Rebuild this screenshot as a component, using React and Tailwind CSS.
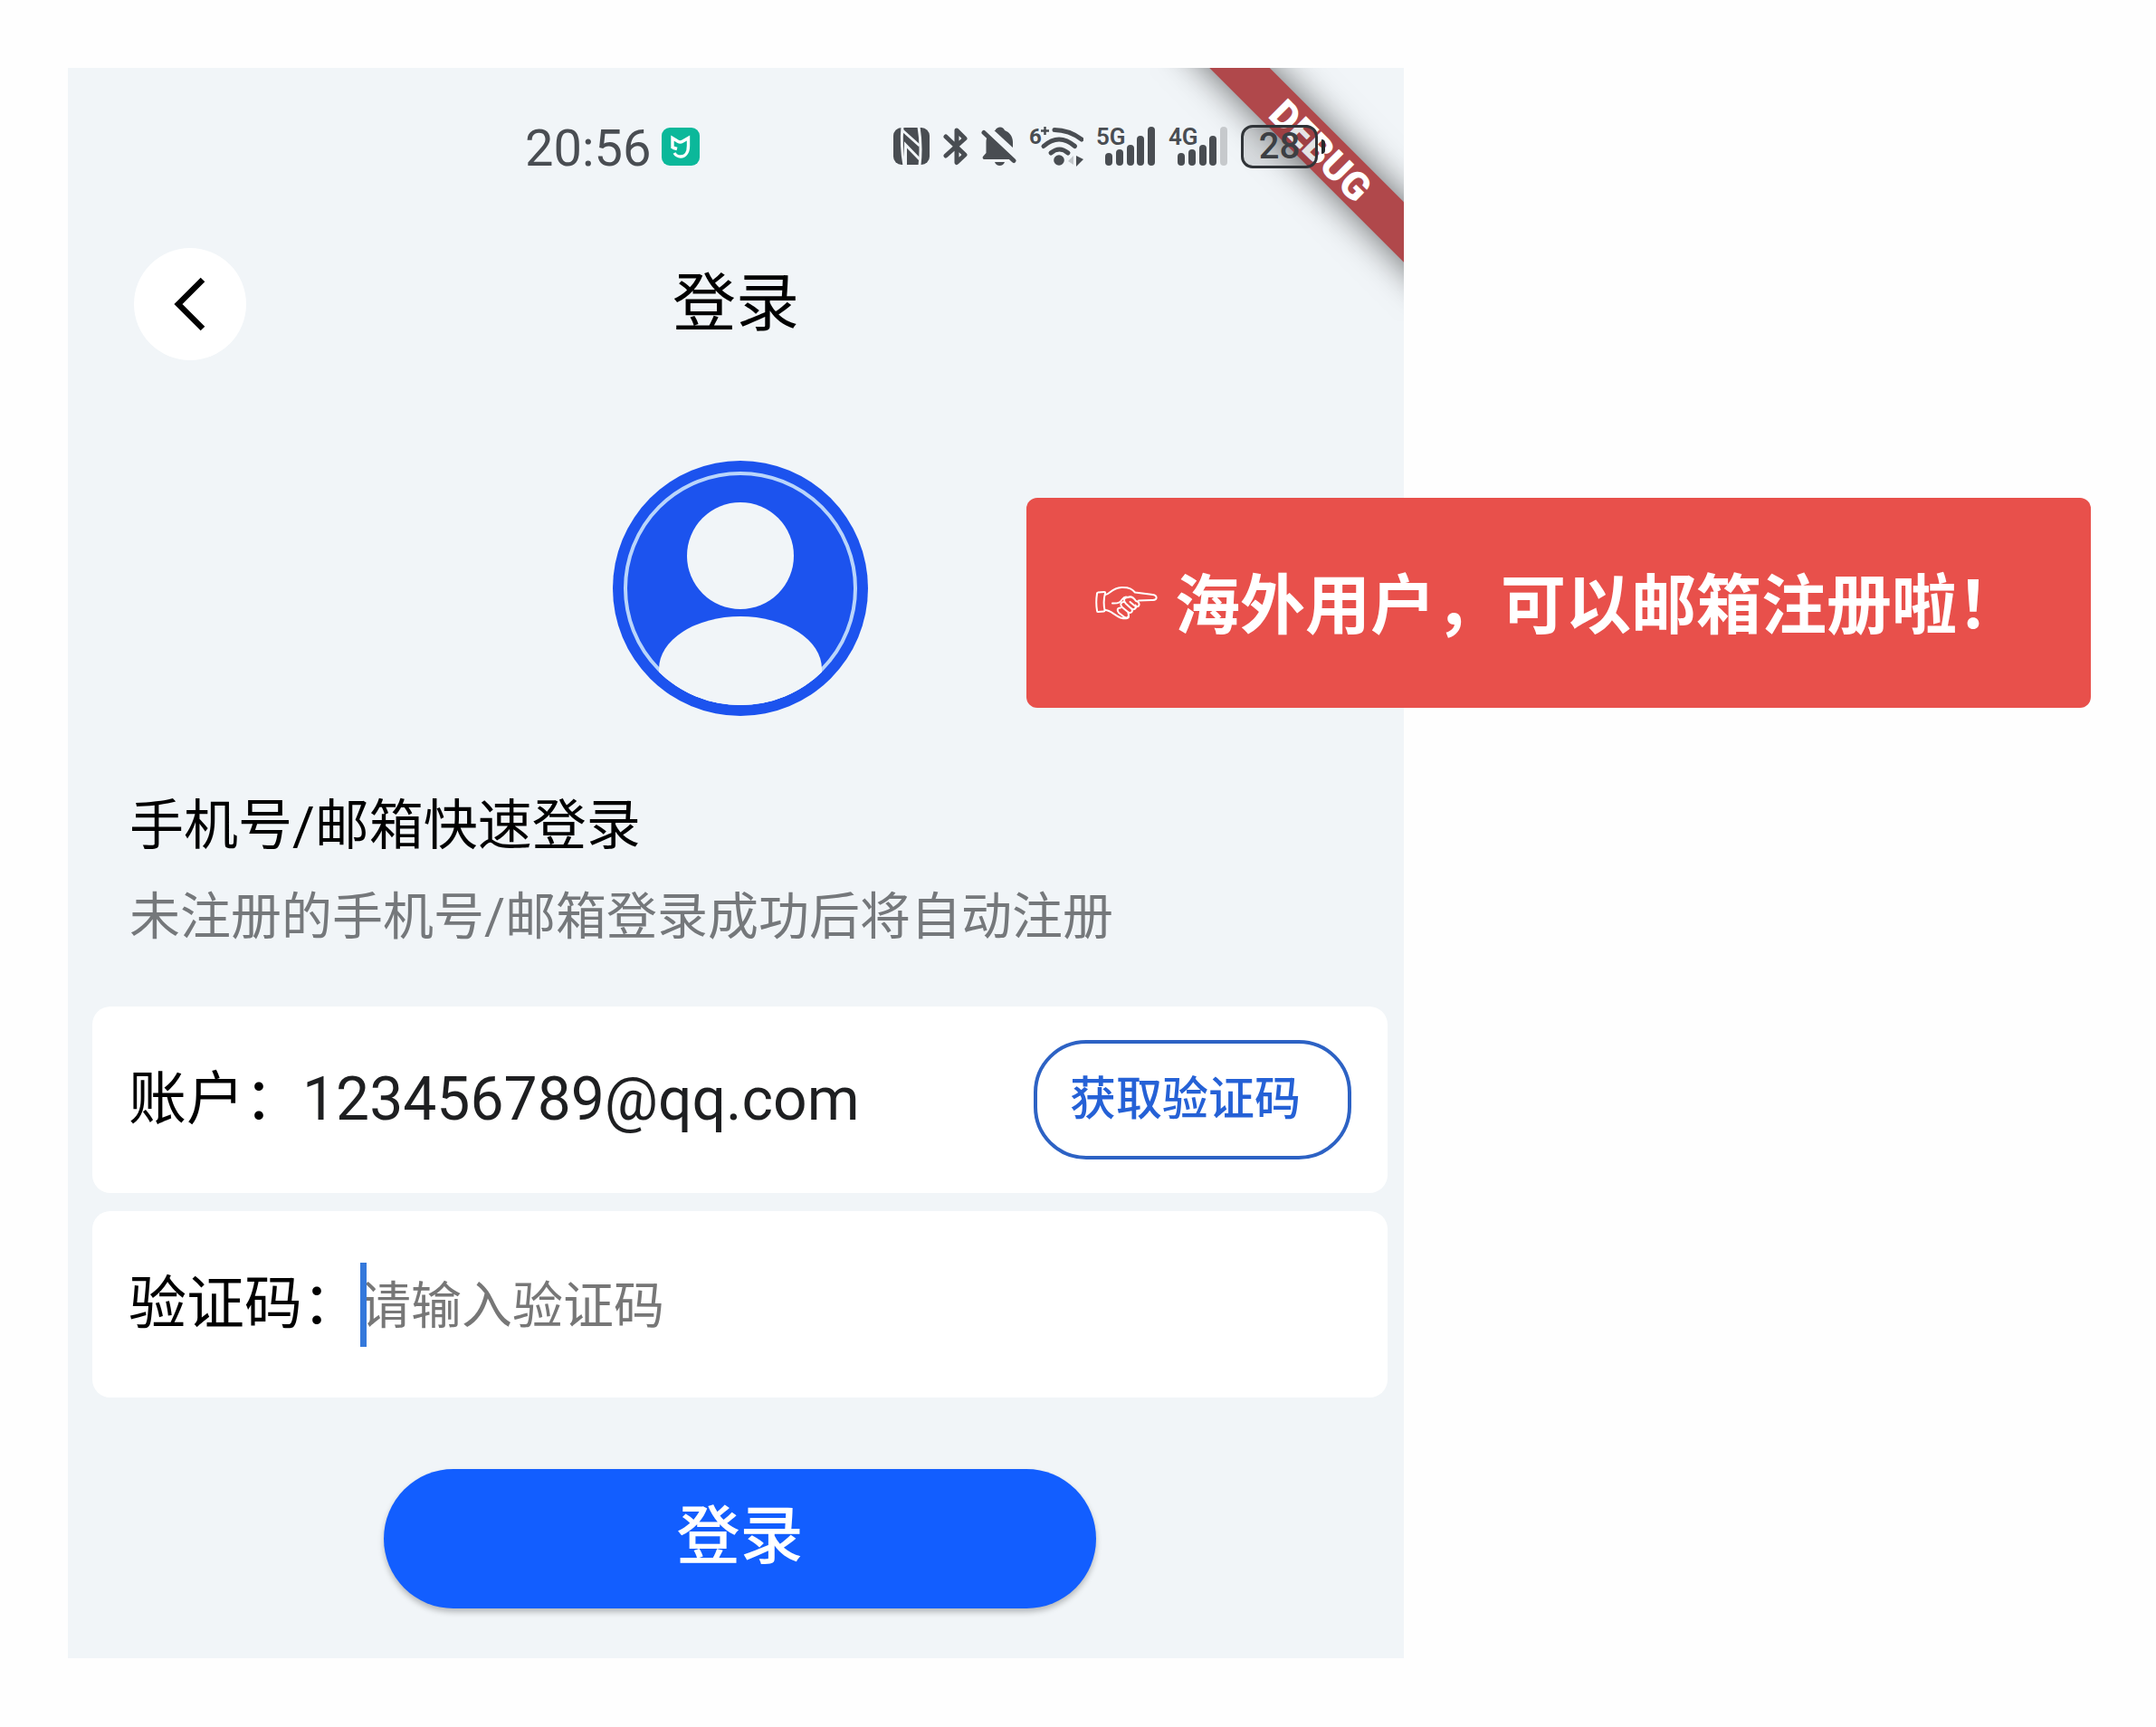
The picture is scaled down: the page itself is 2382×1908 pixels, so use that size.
import React, { useState } from "react";

const BG = "#f1f5f8";
const INK = "#494d52";

function MiHomeIcon() {
  return (
    <svg viewBox="0 0 42 42" className="size-[42px]" aria-hidden="true">
      <rect width="42" height="42" rx="9" fill="#0bb89a" />
      <path
        d="M12 23V11.500l6 3.800a5 5 0 0 0 5 0l6.500-3.800V20c0 7.500-3.500 12-8.500 12-3 0-5.500-1.500-7-4M12 22l5 1.500"
        fill="none"
        stroke="#fff"
        strokeWidth="3.400"
      />
    </svg>
  );
}

function NfcIcon() {
  return (
    <svg viewBox="0 0 40 46" className="h-[46px] w-10" aria-hidden="true">
      <rect x="0" y="2" width="40" height="41" rx="9" fill={INK} />
      <g fill="none" stroke={BG} strokeWidth="3">
        <path d="M10 1Q8 22 12 44" />
        <path d="M28 1Q31.500 22 29 44" />
        <path d="M10 5L29 22" />
        <path d="M13.500 44V21L29 37" />
      </g>
    </svg>
  );
}

function BluetoothIcon() {
  return (
    <svg viewBox="0 0 28 46" className="h-[46px] w-7" aria-hidden="true">
      <path
        d="M4 12L25 32L16 40.500V5L25 14L4 33"
        fill="none"
        stroke={INK}
        strokeWidth="5"
        strokeLinejoin="round"
        strokeLinecap="round"
      />
    </svg>
  );
}

function BellOffIcon() {
  return (
    <svg viewBox="0 0 40 46" className="h-[46px] w-10" aria-hidden="true">
      <path
        d="M22 1.500c2.500 0 4 1.500 5 3.500 5.500 2 9 7 9 13v9l1 6.500c.6 1.800-.2 3.500-2 3.500H5c-2.500 0-3-2-1.600-3.500L6.500 30V18c0-6 4-11 10-13 1-2 3-3.500 5.500-3.500z"
        fill={INK}
      />
      <path d="M16 40h11c-.8 2.800-3 4-5.500 4s-4.700-1.200-5.500-4z" fill={INK} />
      <path d="M5 1L43 36" stroke={BG} strokeWidth="8" />
      <path d="M4 7.500L37 38.500" stroke={INK} strokeWidth="5" strokeLinecap="round" />
    </svg>
  );
}

function WifiIcon() {
  return (
    <div className="relative h-[46px] w-[60px]">
      <svg viewBox="0 0 60 46" className="h-[46px] w-[60px]" aria-hidden="true">
        <path d="M17.500 1v9M13 5.500h9" stroke={INK} strokeWidth="2.500" />
        <g fill="none" stroke={INK} strokeWidth="5" strokeLinecap="round">
          <path d="M28 4.500Q44 4.500 58 15" />
          <path d="M16 22.500Q33 7.500 50.500 22.500" />
          <path d="M24 30Q33.500 22 43 30" />
        </g>
        <circle cx="33" cy="38" r="5.800" fill={INK} />
        <path d="M49 33v10l-6-4z" fill="#c3c7cb" />
        <path d="M52 33l8 4-8 8z" fill={INK} />
      </svg>
      <span className="absolute top-0 left-0 text-[24px] leading-6 font-bold">6</span>
    </div>
  );
}

function SignalIcon({ label, bars }) {
  const tops = [30, 26, 21, 11, 1];
  return (
    <div className="relative h-[46px] w-[66px]">
      <svg viewBox="0 0 66 46" className="h-[46px] w-[66px]" aria-hidden="true">
        {tops.map((top, i) => (
          <rect
            key={top}
            x={10 + i * 12 - (i > 2 ? 1 : 0)}
            y={top}
            width="8"
            height={44 - top}
            rx="4"
            fill={i < bars ? INK : "#c6c9cc"}
          />
        ))}
      </svg>
      <span className="absolute top-0 left-0 text-[26px] leading-6 font-semibold">{label}</span>
    </div>
  );
}

function Battery({ level }) {
  return (
    <div className="flex items-center gap-1">
      <div className="flex h-12 w-[85px] items-center justify-center rounded-[13px] border-[3px] border-[#303438] bg-black/10 text-[40px] leading-none font-medium text-[#3c3f43]">
        {level}
      </div>
      <span className="h-4 w-1 rounded-r-full bg-[#25282b]" />
    </div>
  );
}

function StatusBar() {
  return (
    <div className="relative z-10 mt-16 flex h-[46px] items-center pr-[87px] pl-[505px] text-[#494d52]">
      <span className="pt-1 text-[56px] leading-[46px]">20:56</span>
      <span className="ml-3">
        <MiHomeIcon />
      </span>
      <div className="ml-auto flex items-center gap-3.5">
        <NfcIcon />
        <BluetoothIcon />
        <BellOffIcon />
        <WifiIcon />
        <SignalIcon label="5G" bars={5} />
        <SignalIcon label="4G" bars={4} />
        <Battery level={28} />
      </div>
    </div>
  );
}

function DebugBanner() {
  return (
    <div className="pointer-events-none absolute top-0 right-0 size-[280px] overflow-hidden">
      <div className="absolute top-[67px] -right-[109px] flex h-[47px] w-[400px] rotate-45 items-center justify-center bg-[#b0484b] pt-1 text-[43px] leading-none font-black text-white shadow-[0_0_40px_rgba(0,0,0,0.6)]">
        DEBUG
      </div>
    </div>
  );
}

function Header() {
  return (
    <header className="relative mt-[89px] flex h-[124px] items-center justify-center">
      <button
        type="button"
        aria-label="返回"
        className="absolute left-[73px] flex size-[124px] items-center justify-center rounded-full bg-white"
      >
        <svg viewBox="0 0 36 60" className="h-[60px] w-9" aria-hidden="true">
          <path d="M32 3L5 30L32 57" fill="none" stroke="#000" strokeWidth="6.500" />
        </svg>
      </button>
      <h1 className="text-[70px] leading-[70px] text-black">登录</h1>
    </header>
  );
}

function Avatar() {
  return (
    <svg viewBox="0 0 282 282" className="size-[282px]" role="img" aria-label="头像">
      <defs>
        <clipPath id="avatar-clip">
          <circle cx="141" cy="141" r="129" />
        </clipPath>
      </defs>
      <circle cx="141" cy="141" r="141" fill="#1c53ee" />
      <circle cx="141" cy="141" r="127" fill="none" stroke="#b9d5fb" strokeWidth="4" />
      <circle cx="141" cy="105" r="59" fill={BG} />
      <ellipse cx="141" cy="230" rx="90" ry="58" fill={BG} clipPath="url(#avatar-clip)" />
      <path d="M51 229h180v60H51z" fill={BG} clipPath="url(#avatar-clip)" />
    </svg>
  );
}

function PointingHand() {
  return (
    <svg
      viewBox="0 0 70 38"
      className="h-[38px] w-[70px]"
      fill="none"
      stroke="currentColor"
      strokeWidth="2"
      strokeLinejoin="round"
      strokeLinecap="round"
      aria-hidden="true"
    >
      <path d="M3 7.500l7-.5q1.500 0 1 1.500-2.500 8.500-.5 18.500 0 1.500-1 1.500l-6.500.500q-1 0-1-1.500-1.500-9 0-18.500 0-1.500 1-1.500z" />
      <path d="M11 10c5 0 7-7.500 18-8 9-.3 12 2 15 5.500l19.500 2.500c5.500 1 5.500 5.500 0 6l-15.500.500" />
      <path d="M11 27c6 0 9 5 17 8.500 5 1.500 9 1 9-1.500" />
      <path d="M19 19.500c7 .5 9-1.500 11-4.500 1.500-2 4-3 6-2" />
      <path d="M36 13c-5 0-5 4-2 7l6 5.500c3 2 6.500-1 4.500-4" />
      <path d="M36 13c4-2 7 1 9 4 3 .5 4.500 3 3 5.500-1 1-2 1-3.500.500l-6-5" />
      <path d="M32 18c-4 0-5 3-2 6l6 5c3 2.500 6 0 4.500-3.500" />
      <path d="M28 24.500c-4 0-4 3-2 5.500l6.500 5c3 1.500 5.500-1 4-4.500" />
    </svg>
  );
}

export default function App() {
  const [account, setAccount] = useState("123456789@qq.com");
  const [code, setCode] = useState("");

  return (
    <main className="relative grid grid-cols-[1476fr_756fr] bg-[#fefefe] px-[75px] pt-[75px] pb-[76px] font-[Roboto,'Noto_Sans_CJK_SC',sans-serif]">
      <section className="relative flex flex-col bg-[#f1f5f8]">
        <DebugBanner />
        <StatusBar />
        <Header />

        <form
          className="mt-[111px] flex flex-col pr-[18px] pb-[55px] pl-[27px]"
          onSubmit={(e) => e.preventDefault()}
        >
          <div className="flex justify-center">
            <Avatar />
          </div>

          <h2 className="mt-[82px] pl-[41px] text-[60px] leading-[80px] text-black">
            手机号/邮箱快速登录
          </h2>
          <p className="mt-5 pl-[41px] text-[56px] leading-[80px] text-[#75787b]">
            未注册的手机号/邮箱登录成功后将自动注册
          </p>

          <div className="mt-[59px] flex h-[206px] items-center rounded-[20px] bg-white px-10">
            <label htmlFor="account" className="shrink-0 text-[64px] leading-[80px] text-black">
              账户：
            </label>
            <input
              id="account"
              type="text"
              value={account}
              onChange={(e) => setAccount(e.target.value)}
              className="min-w-0 flex-1 bg-transparent text-[66px] leading-[80px] text-[#1e1f21] outline-none"
            />
            <button
              type="button"
              className="h-[132px] shrink-0 rounded-[58px] border-4 border-[#2d62c4] pr-[52px] pl-9 text-[51px] leading-[60px] font-medium text-[#2561d6]"
            >
              获取验证码
            </button>
          </div>

          <div className="mt-5 flex h-[206px] items-center rounded-[20px] bg-white px-10">
            <label htmlFor="code" className="shrink-0 text-[64px] leading-[80px] text-black">
              验证码：
            </label>
            <div className="relative flex flex-1 items-center">
              <input
                id="code"
                type="text"
                value={code}
                placeholder="请输入验证码"
                onChange={(e) => setCode(e.target.value)}
                className="min-w-0 flex-1 bg-transparent pt-1 text-[56px] leading-[80px] text-[#1e1f21] caret-[#3478db] outline-none placeholder:text-[#777]"
              />
              <span className="absolute left-0 h-[93px] w-[7px] bg-[#3478db]" />
            </div>
          </div>

          <button
            type="submit"
            className="mt-[79px] h-[154px] w-[55%] self-center rounded-full bg-[#125eff] pb-1 text-[70px] leading-[80px] font-medium text-white shadow-[0_4px_6px_rgba(0,0,0,0.25)]"
          >
            登录
          </button>
        </form>
      </section>

      <aside className="absolute top-[550px] right-[72px] flex h-[232px] items-center gap-[18px] rounded-xl bg-[#e8504b] px-[76px] text-white">
        <PointingHand />
        <strong className="pt-2 text-[72px] leading-[80px] font-bold">海外用户，可以邮箱注册啦！</strong>
      </aside>
    </main>
  );
}
